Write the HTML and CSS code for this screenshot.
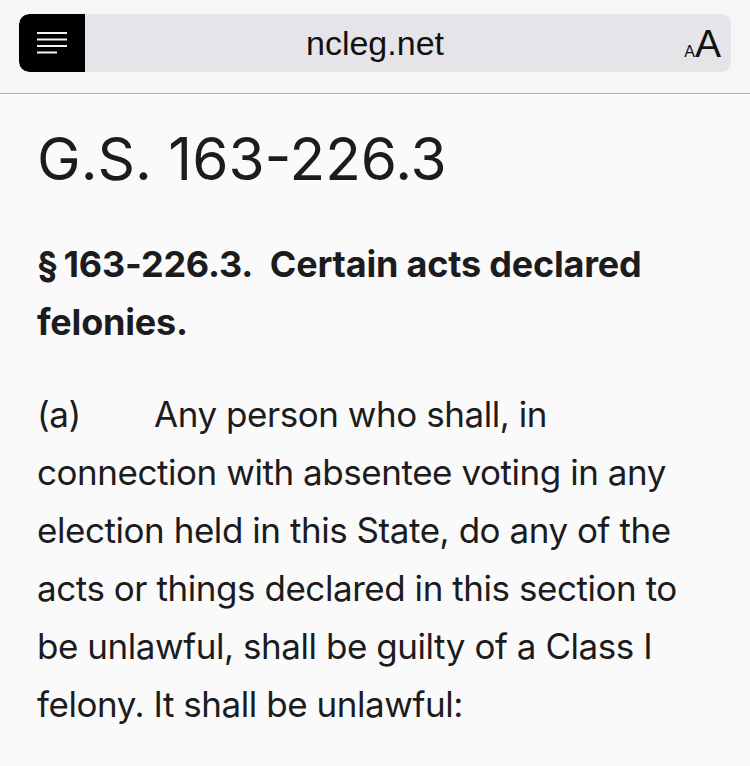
FILE: index.html
```html
<!DOCTYPE html>
<html lang="en">
<head>
<meta charset="utf-8">
<title>G.S. 163-226.3</title>
<link rel="stylesheet" href="styles.css">
</head>
<body>
<header class="topbar">
  <div class="pill">
    <button class="menu-btn" aria-label="Reader">
      <svg width="30" height="22" viewBox="0 0 30 22">
        <g stroke="#f2f2f2" stroke-width="2.2">
          <line x1="0" y1="1" x2="30" y2="1"/>
          <line x1="0" y1="7.5" x2="30" y2="7.5"/>
          <line x1="0" y1="14" x2="30" y2="14"/>
          <line x1="0" y1="20.5" x2="20" y2="20.5"/>
        </g>
      </svg>
    </button>
    <div class="url">ncleg.net</div>
    <div class="textsize"><span class="small-a">A</span><span class="big-a">A</span></div>
  </div>
</header>
<main class="article">
  <h1 class="title">G.S. 163-226.3</h1>
  <h2 class="section">§&#8201;163-226.3.&nbsp; Certain acts declared felonies.</h2>
  <p class="body">(a)&#9;Any person who shall, in connection with absentee voting in any election held in this State, do any of the acts or things declared in this section to be unlawful, shall be guilty of a Class I felony. It shall be unlawful:</p>
</main>
</body>
</html>
```

FILE: styles.css
```css
* { box-sizing: border-box; }
html, body { margin: 0; padding: 0; }
body {
  background: #fafafa;
  color: #1c1c1e;
  font-family: "Inter", "Liberation Sans", sans-serif;
  width: 750px;
  height: 766px;
  overflow: hidden;
}
.topbar {
  background: #f6f6f6;
  height: 94px;
  padding: 14px 19px 0 19px;
  border-bottom: 1px solid #b4b4b4;
}
.pill {
  height: 58px;
  background: #e4e4e9;
  border-radius: 10px;
  display: grid;
  grid-template-columns: 66px 1fr 66px;
  align-items: center;
  overflow: hidden;
}
.menu-btn {
  height: 58px;
  width: 66px;
  background: #000;
  border: 0;
  margin: 0;
  border-radius: 10px 0 0 10px;
  display: flex;
  align-items: flex-start;
  justify-content: flex-start;
  padding: 18px 0 0 18px;
}
.menu-btn svg { display: block; }
.url {
  text-align: center;
  font-family: "Liberation Sans", "Inter", sans-serif;
  font-size: 34px;
  color: #111;
  line-height: 58px;
}
.textsize {
  text-align: right;
  padding-right: 10px;
  font-family: "Liberation Sans", sans-serif;
  color: #111;
  line-height: 1;
  white-space: nowrap;
}
.small-a { font-size: 16px; }
.big-a { font-size: 39px; }
.article {
  padding: 29px 37px 0 37px;
}
.title {
  margin: 0;
  font-weight: 400;
  font-size: 58.5px;
  line-height: 72px;
  letter-spacing: 0;
}
.section {
  margin: 40px 0 0 0;
  font-weight: 700;
  font-size: 36px;
  line-height: 58px;
  letter-spacing: -0.2px;
}
.body {
  margin: 34px 0 0 0;
  font-size: 35px;
  line-height: 58px;
  letter-spacing: -0.45px;
  white-space: pre-wrap;
  tab-size: 117px;
}
```
